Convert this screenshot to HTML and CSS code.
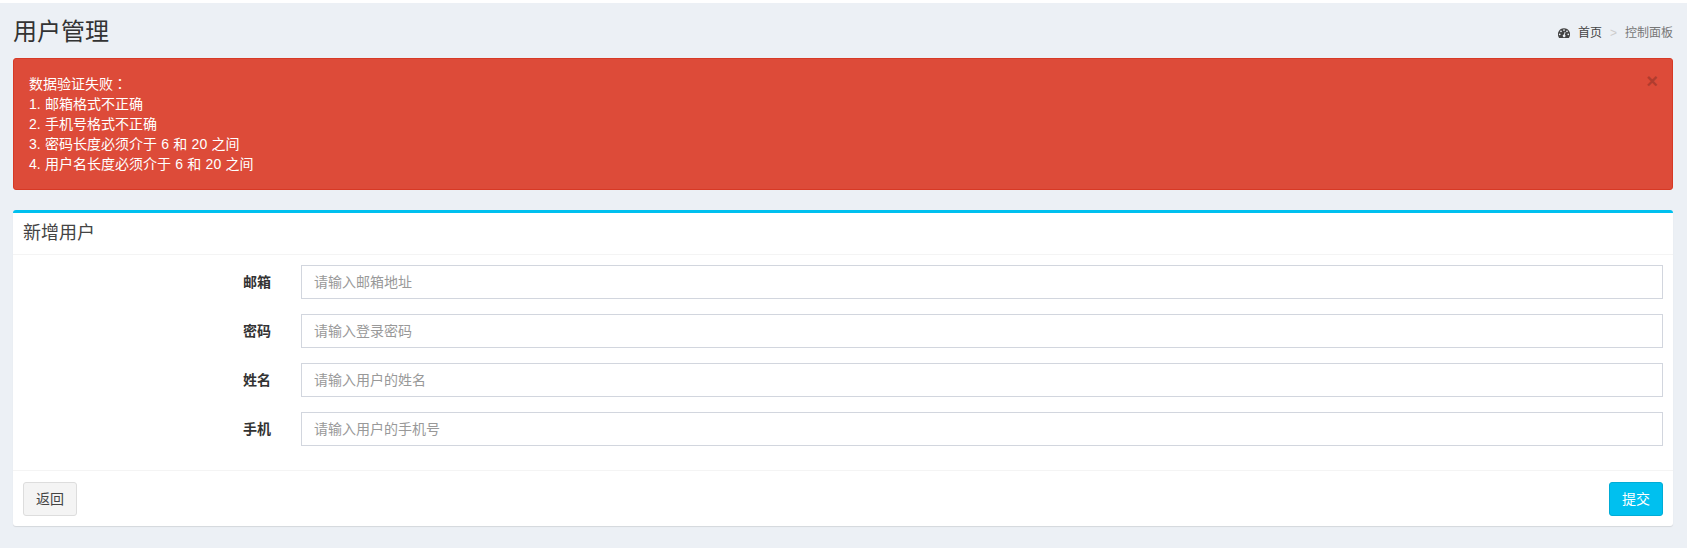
FILE: index.html
```html
<!DOCTYPE html>
<html lang="zh-CN">
<head>
<meta charset="utf-8">
<title>用户管理</title>
<link rel="stylesheet" href="styles.css">
</head>
<body>
<main class="content-wrapper">
  <header class="content-header">
    <h1>用户管理</h1>
    <nav class="breadcrumb">
      <svg class="dash-icon" viewBox="0 0 14 12" aria-hidden="true">
        <path fill="currentColor" fill-rule="evenodd" d="M7 0a7 7 0 0 0-5.900 10.900q.2.4.6.4h10.600q.4 0 .6-.4A7 7 0 0 0 7 0zM2 6a1 1 0 1 0 0 2a1 1 0 0 0 0-2zM3.500 2.500a1 1 0 1 0 0 2a1 1 0 0 0 0-2zM7 1a1 1 0 1 0 0 2a1 1 0 0 0 0-2zM10.500 2.500a1 1 0 1 0 0 2a1 1 0 0 0 0-2zM12 6a1 1 0 1 0 0 2a1 1 0 0 0 0-2zM7.800 4.100l-.8 3.200a1.500 1.500 0 1 0 1 .3l.8-3.200z"/>
      </svg>
      <a class="home" href="#">首页</a>
      <span class="sep">&gt;</span>
      <span class="current">控制面板</span>
    </nav>
  </header>

  <section class="alert">
    <div class="alert-text">
      <p>数据验证失败<span class="colon" lang="zh-TW">：</span></p>
      <p>1. 邮箱格式不正确</p>
      <p>2. 手机号格式不正确</p>
      <p>3. 密码长度必须介于 6 和 20 之间</p>
      <p>4. 用户名长度必须介于 6 和 20 之间</p>
    </div>
    <button class="close" type="button">×</button>
  </section>

  <form class="box">
    <h3 class="box-title">新增用户</h3>
    <div class="box-body">
      <div class="form-group"><label for="email">邮箱</label><input id="email" type="text" placeholder="请输入邮箱地址"></div>
      <div class="form-group"><label for="password">密码</label><input id="password" type="password" placeholder="请输入登录密码"></div>
      <div class="form-group"><label for="name">姓名</label><input id="name" type="text" placeholder="请输入用户的姓名"></div>
      <div class="form-group"><label for="phone">手机</label><input id="phone" type="text" placeholder="请输入用户的手机号"></div>
    </div>
    <div class="box-footer">
      <button class="btn btn-default" type="button">返回</button>
      <button class="btn btn-info" type="button">提交</button>
    </div>
  </form>
</main>
</body>
</html>
```
FILE: styles.css
```css
* {
  box-sizing: border-box;
}

body {
  margin: 0;
  padding: 3px 4px 0 0;
  background: #fff;
  color: #333;
  font: 14px/20px "Liberation Sans", "Noto Sans CJK SC", sans-serif;
}

h1, h3, p {
  margin: 0;
}

.content-wrapper {
  height: 545px;
  padding: 0 14px 0 13px;
  background: #ecf0f5;
}

.content-header {
  display: flex;
  justify-content: space-between;
  height: 55px;
}

.content-header h1 {
  padding-top: 16px;
  font-size: 24px;
  font-weight: 400;
  line-height: 26px;
}

.breadcrumb {
  display: flex;
  align-items: center;
  height: 20px;
  margin-top: 20px;
  font-size: 12px;
}

.dash-icon {
  width: 12px;
  height: 11px;
  margin: 1px 8px 0 0;
  color: #444;
}

.home {
  color: #444;
  text-decoration: none;
}

.sep {
  width: 23px;
  color: #ccc;
  text-align: center;
}

.current {
  color: #777;
}

.alert {
  display: flex;
  justify-content: space-between;
  align-items: flex-start;
  height: 132px;
  margin-bottom: 20px;
  padding: 15px;
  border: 1px solid #d73925;
  border-radius: 3px;
  background: #dd4b39;
  color: #fff;
  word-spacing: 0.4px;
}

.alert p {
  height: 20px;
}

.colon {
  font-family: "Noto Sans CJK TC", sans-serif;
  line-height: 1;
}

.close {
  margin: -3px -1px 0 0;
  padding: 0;
  border: 0;
  background: none;
  color: #b13c2e;
  font: bold 20px/20px "Liberation Sans", sans-serif;
}

.box {
  height: 316px;
  border-top: 3px solid #00c0ef;
  border-radius: 3px;
  background: #fff;
  box-shadow: 0 1px 1px rgba(0, 0, 0, 0.1);
}

.box-title {
  height: 42px;
  padding: 10px 10px 0;
  border-bottom: 1px solid #f4f4f4;
  color: #444;
  font-size: 18px;
  font-weight: 400;
  line-height: 20px;
}

.box-body {
  display: flex;
  flex-direction: column;
  gap: 15px;
  height: 215px;
  padding: 10px;
}

.form-group {
  display: grid;
  grid-template-columns: 248px 1fr;
  column-gap: 30px;
}

.form-group label {
  padding-top: 7px;
  font-weight: 700;
  text-align: right;
}

.form-group input {
  width: 100%;
  height: 34px;
  padding: 6px 12px;
  border: 1px solid #d2d6de;
  border-radius: 0;
  background: #fff;
  color: #555;
  font: inherit;
}

.form-group input::placeholder {
  color: #999;
  opacity: 1;
}

.box-footer {
  display: flex;
  justify-content: space-between;
  padding: 11px 10px 10px;
  border-top: 1px solid #f4f4f4;
}

.btn {
  height: 34px;
  padding: 6px 12px;
  border: 1px solid;
  border-radius: 3px;
  font: inherit;
}

.btn-default {
  border-color: #ddd;
  background: #f4f4f4;
  color: #444;
}

.btn-info {
  border-color: #00acd6;
  background: #00c0ef;
  color: #fff;
}
```
